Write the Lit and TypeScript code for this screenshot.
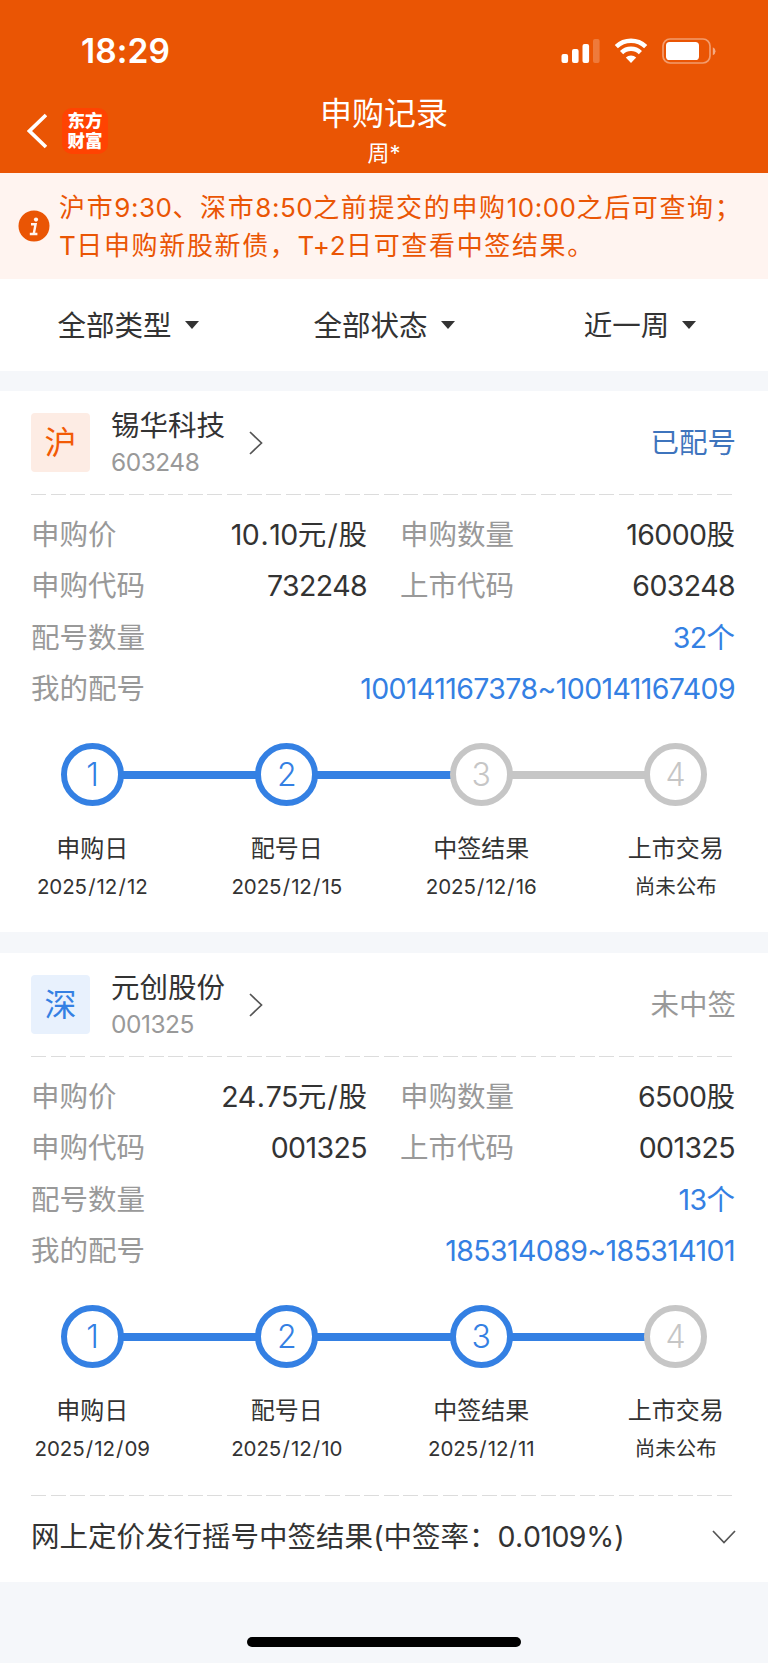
import { LitElement, html, css } from "lit";
import { customElement, property } from "lit/decorators.js";

const FONT = css`
  font-family: "Inter", "Noto Sans CJK SC", sans-serif;
`;

const latin = css`
  .n {
    letter-spacing: var(--latin-spacing, -0.021em);
  }
  .p {
    margin: 0 var(--mark-gap, 1.2px);
  }
`;

/** Wraps runs of digits and Latin characters, and their marks, so they can be tracked apart from the Chinese text. */
const mixed = (text: string) =>
  text
    .split(/([./%()]|[\x20-\x24\x26\x27\x2a-\x2d\x30-\x7e]+)/)
    .filter(Boolean)
    .map((part) =>
      /^[./%()]$/.test(part)
        ? html`<span class="n p">${part}</span>`
        : /^[\x20-\x7e]/.test(part)
          ? html`<span class="n">${part}</span>`
          : part,
    );

interface Step {
  label: string;
  date: string;
  done: boolean;
}

interface Subscription {
  market: string;
  blue?: boolean;
  name: string;
  code: string;
  status: string;
  assigned?: boolean;
  price: string;
  amount: string;
  applyCode: string;
  listCode: string;
  count: string;
  numbers: string;
  steps: Step[];
  result?: string;
}

const RECORDS: Subscription[] = [
  {
    market: "沪",
    name: "锡华科技",
    code: "603248",
    status: "已配号",
    assigned: true,
    price: "10.10元/股",
    amount: "16000股",
    applyCode: "732248",
    listCode: "603248",
    count: "32个",
    numbers: "100141167378~100141167409",
    steps: [
      { label: "申购日", date: "2025/12/12", done: true },
      { label: "配号日", date: "2025/12/15", done: true },
      { label: "中签结果", date: "2025/12/16", done: false },
      { label: "上市交易", date: "尚未公布", done: false },
    ],
  },
  {
    market: "深",
    blue: true,
    name: "元创股份",
    code: "001325",
    status: "未中签",
    price: "24.75元/股",
    amount: "6500股",
    applyCode: "001325",
    listCode: "001325",
    count: "13个",
    numbers: "185314089~185314101",
    steps: [
      { label: "申购日", date: "2025/12/09", done: true },
      { label: "配号日", date: "2025/12/10", done: true },
      { label: "中签结果", date: "2025/12/11", done: true },
      { label: "上市交易", date: "尚未公布", done: false },
    ],
    result: "网上定价发行摇号中签结果(中签率：0.0109%)",
  },
];

@customElement("status-bar")
class StatusBar extends LitElement {
  static styles = css`
    :host {
      display: flex;
      justify-content: space-between;
      align-items: center;
      height: 102px;
      padding: 0 51px 0 81px;
      box-sizing: border-box;
      color: #fff;
      ${FONT}
    }
    .time {
      font-size: 33.5px;
      font-weight: 600;
      letter-spacing: 0.1px;
      line-height: 40px;
    }
    svg {
      display: block;
    }
  `;
  render() {
    return html`
      <span class="time">18:29</span>
      <svg width="156" height="26" viewBox="0 0 156 26" fill="#fff">
        <rect x="0.5" y="16" width="6.6" height="9" rx="2" />
        <rect x="11" y="11" width="6.6" height="14" rx="2" />
        <rect x="21.5" y="6" width="6.6" height="19" rx="2" />
        <rect x="32" y="1" width="6.6" height="24" rx="2" opacity="0.22" />
        <g fill="none" stroke="#fff" stroke-width="4.6">
          <path d="M55.300 8.600A21.500 21.500 0 0 1 84.700 8.600" />
          <path d="M60.600 14.600A13.500 13.500 0 0 1 79.400 14.600" />
        </g>
        <path d="M70 25L64.800 19.600A7.500 7.500 0 0 1 75.200 19.600Z" />
        <rect x="102" y="1" width="47" height="24" rx="7" fill="none" stroke="#fff" stroke-opacity="0.42" stroke-width="1.700" />
        <rect x="105" y="4" width="33" height="18" rx="3.600" />
        <path d="M151.800 9.200a4.300 4.300 0 0 1 0 8z" opacity="0.5" />
      </svg>
    `;
  }
}

@customElement("nav-header")
class NavHeader extends LitElement {
  static styles = css`
    :host {
      display: grid;
      grid-template-columns: 200px 1fr 200px;
      height: 71px;
      color: #fff;
      ${FONT}
    }
    .left {
      display: flex;
      align-items: center;
      gap: 15px;
      height: 58px;
      padding-left: 27px;
    }
    .logo {
      width: 46px;
      height: 46px;
      padding-top: 2px;
      box-sizing: border-box;
      border-radius: 10px;
      background: #ff4302;
      font: 900 17.5px/19.5px "Noto Sans CJK SC", sans-serif;
      text-align: center;
    }
    .middle {
      display: flex;
      flex-direction: column;
      align-items: center;
    }
    .title {
      margin-top: -8px;
      font-size: 32px;
      line-height: 40px;
    }
    .user {
      margin-top: 5px;
      font-size: 22px;
      line-height: 28px;
    }
    svg {
      display: block;
    }
  `;
  render() {
    return html`
      <div class="left">
        <svg width="20" height="36" viewBox="0 0 20 36">
          <path d="M19 2L2.500 18L19 34" fill="none" stroke="#fff" stroke-width="3.700" />
        </svg>
        <div class="logo">东方<br />财富</div>
      </div>
      <div class="middle">
        <div class="title">申购记录</div>
        <div class="user">周*</div>
      </div>
    `;
  }
}

@customElement("notice-bar")
class NoticeBar extends LitElement {
  static styles = [
    latin,
    css`
      :host {
        display: flex;
        align-items: center;
        height: 106px;
        gap: 9px;
        padding-left: 18px;
        box-sizing: border-box;
        background: #fff4f0;
        color: #ea5504;
        white-space: nowrap;
        --latin-spacing: 0.5px;
        ${FONT}
      }
      .text {
        padding-top: 1px;
        font-size: 26px;
        letter-spacing: 1.65px;
        line-height: 37.5px;
      }
      svg {
        flex: none;
      }
    `,
  ];
  render() {
    return html`
      <svg width="32" height="32" viewBox="0 0 32 32">
        <circle cx="16" cy="16" r="15.500" fill="#ea5504" />
        <circle cx="18" cy="9.600" r="2.100" fill="#fff4f0" />
        <path d="M13 14.200h4.600l-1.800 9.400M11.800 24h7.600" fill="none" stroke="#fff4f0" stroke-width="2.400" />
      </svg>
      <div class="text">
        <div>${mixed("沪市9:30、深市8:50之前提交的申购10:00之后可查询；")}</div>
        <div>${mixed("T日申购新股新债，T+2日可查看中签结果。")}</div>
      </div>
    `;
  }
}

@customElement("filter-bar")
class FilterBar extends LitElement {
  static styles = css`
    :host {
      display: grid;
      grid-template-columns: repeat(3, 1fr);
      align-items: center;
      height: 92px;
      padding-top: 2px;
      box-sizing: border-box;
      background: #fff;
      color: #333;
      ${FONT}
    }
    .item {
      display: flex;
      align-items: center;
      justify-content: center;
      gap: 13px;
      font-size: 28.5px;
      line-height: 40px;
    }
    .caret {
      margin-top: -2px;
      border: 7.5px solid transparent;
      border-top: 8.5px solid #333;
      border-bottom: 0;
    }
  `;
  render() {
    return ["全部类型", "全部状态", "近一周"].map(
      (label) => html`<div class="item">${label}<span class="caret"></span></div>`,
    );
  }
}

@customElement("step-track")
class StepTrack extends LitElement {
  @property({ attribute: false }) steps: Step[] = [];

  static styles = [
    latin,
    css`
      :host {
        display: block;
        color: #333;
        ${FONT}
      }
      .track {
        display: flex;
        align-items: center;
        padding: 0 61px;
      }
      .dot {
        flex: none;
        width: 63px;
        height: 63px;
        box-sizing: border-box;
        border: 6px solid #c6c6c6;
        border-radius: 50%;
        color: #c6c6c6;
        font-size: 32px;
        font-weight: 300;
        line-height: 51px;
        text-align: center;
      }
      .dot.done {
        border-color: #3480e3;
        color: #3480e3;
      }
      .line {
        flex: 1;
        height: 8px;
        margin: 1px -1px 0;
        background: #c6c6c6;
      }
      .line.done {
        background: #3480e3;
      }
      .labels {
        display: grid;
        grid-template-columns: repeat(4, 194.5px);
        justify-content: center;
        margin-top: 25px;
        text-align: center;
      }
      .label {
        font-size: 24px;
        line-height: 36px;
      }
      .date {
        margin-top: 3px;
        font-size: 20.5px;
        line-height: 34px;
        --latin-spacing: -0.1px;
      }
    `,
  ];
  render() {
    return html`
      <div class="track">
        ${this.steps.map(
          (s, i) => html`
            <div class="dot ${s.done ? "done" : ""}">${i + 1}</div>
            ${i < this.steps.length - 1 ? html`<div class="line ${s.done ? "done" : ""}"></div>` : ""}
          `,
        )}
      </div>
      <div class="labels">
        ${this.steps.map(
          (s) => html`<div>
            <div class="label">${s.label}</div>
            <div class="date">${mixed(s.date)}</div>
          </div>`,
        )}
      </div>
    `;
  }
}

@customElement("record-card")
class RecordCard extends LitElement {
  @property({ attribute: false }) record!: Subscription;

  static styles = [
    latin,
    css`
      :host {
        display: block;
        background: #fff;
        color: #333;
        font-size: 28.5px;
        line-height: 40px;
        ${FONT}
      }
      .head {
        display: flex;
        align-items: center;
        height: 103px;
        padding: 0 32px 0 31px;
        box-sizing: border-box;
      }
      .badge {
        width: 59px;
        height: 59px;
        border-radius: 4px;
        background: #fdece4;
        color: #f25a05;
        font-size: 32px;
        line-height: 59px;
        text-align: center;
      }
      .badge.blue {
        background: #e8f1fd;
        color: #3480e3;
      }
      .id {
        margin: 0 24px 0 21px;
      }
      .name {
        line-height: 38px;
      }
      .code {
        color: #999;
        font-size: 24.5px;
        line-height: 34px;
        --latin-spacing: -0.5px;
      }
      .status {
        margin-left: auto;
        color: #999;
      }
      .status.assigned {
        color: #3e74bd;
      }
      .dash {
        height: 1px;
        margin: 0 35px 0 31px;
        background: repeating-linear-gradient(90deg, #dcdcdc 0 15px, transparent 15px 19.6px);
      }
      .rows {
        display: grid;
        grid-template-columns: 336px 335px;
        column-gap: 33px;
        grid-auto-rows: 51.5px;
        align-items: center;
        padding: 14px 32px 0 31px;
        --mark-gap: 1.3px;
      }
      .row {
        display: flex;
        justify-content: space-between;
      }
      .row.wide {
        grid-column: 1 / -1;
      }
      .key {
        color: #999;
      }
      .wide .value {
        color: #3480e3;
      }
      step-track {
        margin-top: 28px;
      }
      .tail {
        height: 28px;
      }
      .tail.open {
        height: 29px;
      }
      .result {
        display: flex;
        align-items: center;
        justify-content: space-between;
        height: 86px;
        padding: 0 32px 5px 31px;
        box-sizing: border-box;
        --mark-gap: 0.3px;
      }
    `,
  ];
  row(key: string, value: string, wide = false) {
    return html`<div class="row ${wide ? "wide" : ""}">
      <span class="key">${key}</span><span class="value">${mixed(value)}</span>
    </div>`;
  }
  render() {
    const r = this.record;
    return html`
      <div class="head">
        <div class="badge ${r.blue ? "blue" : ""}">${r.market}</div>
        <div class="id">
          <div class="name">${r.name}</div>
          <div class="code">${mixed(r.code)}</div>
        </div>
        <svg width="14" height="24" viewBox="0 0 14 24">
          <path d="M1 1L12.500 12L1 23" fill="none" stroke="#555" stroke-width="1.700" />
        </svg>
        <div class="status ${r.assigned ? "assigned" : ""}">${r.status}</div>
      </div>
      <div class="dash"></div>
      <div class="rows">
        ${this.row("申购价", r.price)} ${this.row("申购数量", r.amount)}
        ${this.row("申购代码", r.applyCode)} ${this.row("上市代码", r.listCode)}
        ${this.row("配号数量", r.count, true)} ${this.row("我的配号", r.numbers, true)}
      </div>
      <step-track .steps=${r.steps}></step-track>
      ${r.result
        ? html`<div class="tail open"></div>
            <div class="dash"></div>
            <div class="result">
              <span>${mixed(r.result)}</span>
              <svg width="24" height="14" viewBox="0 0 24 14">
                <path d="M1 1L12 12.500L23 1" fill="none" stroke="#555" stroke-width="1.700" />
              </svg>
            </div>`
        : html`<div class="tail"></div>`}
    `;
  }
}

@customElement("app-root")
class AppRoot extends LitElement {
  static styles = css`
    :host {
      display: flex;
      flex-direction: column;
      width: 768px;
      height: 1663px;
      overflow: hidden;
      background: #f5f7fa;
    }
    .top {
      background: #ea5504;
    }
    .cards {
      display: flex;
      flex-direction: column;
      gap: 21px;
      margin-top: 20px;
    }
    .home {
      width: 274px;
      height: 10px;
      margin: auto auto 16px;
      border-radius: 5px;
      background: #000;
    }
  `;
  render() {
    return html`
      <div class="top">
        <status-bar></status-bar>
        <nav-header></nav-header>
      </div>
      <notice-bar></notice-bar>
      <filter-bar></filter-bar>
      <div class="cards">${RECORDS.map((r) => html`<record-card .record=${r}></record-card>`)}</div>
      <div class="home"></div>
    `;
  }
}
